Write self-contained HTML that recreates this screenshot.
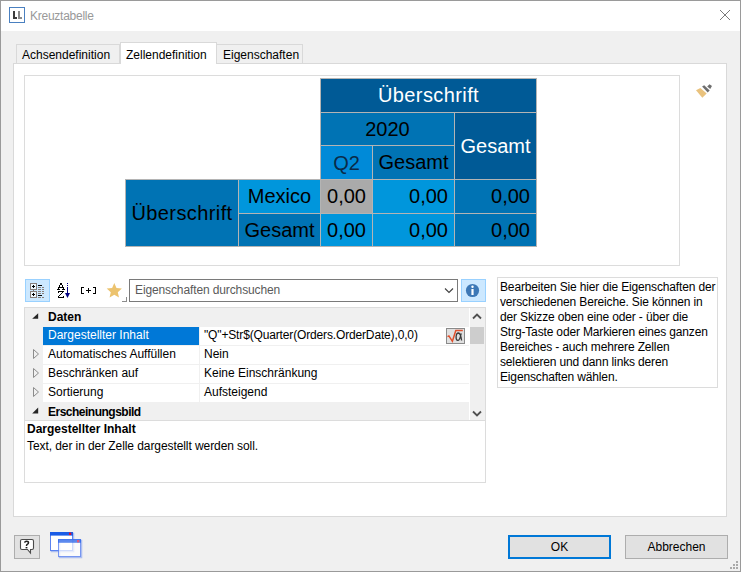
<!DOCTYPE html>
<html><head><meta charset="utf-8">
<style>
*{box-sizing:border-box;margin:0;padding:0}
html,body{width:741px;height:572px;overflow:hidden;background:#f0f0f0}
body{position:relative;font-family:"Liberation Sans",sans-serif;font-size:12px;color:#000}
.a{position:absolute}
.t{position:absolute;white-space:pre;line-height:15px;height:15px}
.xc{border:1px solid #b4b4b4;font-size:20px;white-space:pre;overflow:hidden}
.ct{position:absolute;font-size:20px;line-height:24px;white-space:pre}
</style></head><body>
<!-- window frame -->
<div class="a" style="left:0;top:0;width:741px;height:572px;border:1px solid #9a9a9a"></div>
<div class="a" style="left:1px;top:1px;width:739px;height:30px;background:#fff"></div>
<!-- app icon -->
<div class="a" style="left:9px;top:7px;width:16px;height:16px;border:1px solid #4a80c0;background:#fff"></div>
<div class="a" style="left:13px;top:11px;width:2px;height:8px;background:#3c3c3c"></div>
<div class="a" style="left:13px;top:17px;width:4px;height:2px;background:#3c3c3c"></div>
<div class="a" style="left:18px;top:11px;width:2px;height:8px;background:#8a8a8a"></div>
<div class="a" style="left:18px;top:17px;width:4px;height:2px;background:#8a8a8a"></div>
<div class="t" style="left:30px;top:9px;color:#999;letter-spacing:-0.25px">Kreuztabelle</div>
<!-- close -->
<svg class="a" style="left:715px;top:5px" width="20" height="20"><path d="M5 5L15 15M15 5L5 15" stroke="#7a7a7a" stroke-width="1"/></svg>

<!-- tabs -->
<div class="a" style="left:16px;top:44px;width:104px;height:20px;border:1px solid #d9d9d9;background:#f0f0f0"></div>
<div class="a" style="left:217px;top:44px;width:86px;height:20px;border:1px solid #d9d9d9;border-left:none;background:#f0f0f0"></div>
<div class="a" style="left:13px;top:63px;width:714px;height:454px;border:1px solid #d9d9d9;background:#fff"></div>
<div class="a" style="left:120px;top:42px;width:97px;height:22px;border:1px solid #d9d9d9;border-bottom:none;background:#fff"></div>
<div class="t" style="left:22px;top:48px">Achsendefinition</div>
<div class="t" style="left:126px;top:48px">Zellendefinition</div>
<div class="t" style="left:223px;top:48px">Eigenschaften</div>

<!-- inner sketch box -->
<div class="a" style="left:24px;top:75px;width:656px;height:191px;border:1px solid #dcdcdc;background:#fff"></div>

<!-- crosstab -->
<div id="xt">
<div class="a xc" style="left:320px;top:78px;width:217px;height:35px;background:#005a96;color:#fff;line-height:33px;text-align:center;"><span style="letter-spacing:0.4px">Überschrift</span></div>
<div class="a xc" style="left:320px;top:112px;width:135px;height:34px;background:#0073b4;color:#000;line-height:32px;text-align:center;">2020</div>
<div class="a xc" style="left:454px;top:112px;width:83px;height:68px;background:#005a96;color:#fff;line-height:66px;text-align:center;">Gesamt</div>
<div class="a xc" style="left:320px;top:145px;width:53px;height:35px;background:#008ad8;color:#0a2a48;line-height:35px;text-align:center;">Q2</div>
<div class="a xc" style="left:372px;top:145px;width:83px;height:35px;background:#0073b4;color:#000;line-height:33px;text-align:center;">Gesamt</div>
<div class="a xc" style="left:125px;top:179px;width:114px;height:68px;background:#0073b4;color:#000;line-height:66px;text-align:center;"><span style="letter-spacing:0.4px">Überschrift</span></div>
<div class="a xc" style="left:238px;top:179px;width:83px;height:35px;background:#0096dc;color:#000;line-height:33px;text-align:center;">Mexico</div>
<div class="a xc" style="left:238px;top:213px;width:83px;height:34px;background:#0073b4;color:#000;line-height:32px;text-align:center;">Gesamt</div>
<div class="a xc" style="left:320px;top:179px;width:53px;height:35px;background:#aaaaaa;color:#000;line-height:33px;text-align:right;padding-right:6px;">0,00</div>
<div class="a xc" style="left:372px;top:179px;width:83px;height:35px;background:#0096dc;color:#000;line-height:33px;text-align:right;padding-right:6px;">0,00</div>
<div class="a xc" style="left:454px;top:179px;width:83px;height:35px;background:#0073b4;color:#000;line-height:33px;text-align:right;padding-right:6px;">0,00</div>
<div class="a xc" style="left:320px;top:213px;width:53px;height:34px;background:#0096dc;color:#000;line-height:32px;text-align:right;padding-right:6px;">0,00</div>
<div class="a xc" style="left:372px;top:213px;width:83px;height:34px;background:#0096dc;color:#000;line-height:32px;text-align:right;padding-right:6px;">0,00</div>
<div class="a xc" style="left:454px;top:213px;width:83px;height:34px;background:#0073b4;color:#000;line-height:32px;text-align:right;padding-right:6px;">0,00</div>
</div>

<!-- brush icon -->
<svg class="a" style="left:692px;top:80px" width="24" height="20" viewBox="692 80 24 20">
<path d="M696 90.3L700.4 88L706.7 93.5L702.3 97.8Z" fill="#e9c27d"/>
<path d="M702.1 86.6L704.2 85.2L709.7 90.5L707.7 92.6Z" fill="#6e6e6e"/>
<path d="M707.2 86.5L709.5 84.2L712 86.1L710.2 88.9Z" fill="#6e6e6e"/>
</svg>

<!-- toolbar -->
<div class="a" style="left:25px;top:279px;width:25px;height:23px;background:#cce8ff;border:1px solid #99d1ff"></div>
<svg class="a" style="left:25px;top:279px;shape-rendering:crispEdges" width="105" height="24" viewBox="25 279 105 24">
<rect x="30.5" y="283.5" width="6" height="6" fill="#eef8ff" stroke="#857d7a"/><rect x="30.5" y="291.5" width="6" height="6" fill="#eef8ff" stroke="#857d7a"/><rect x="33" y="290" width="1" height="1" fill="#857d7a"/><rect x="32" y="286" width="3" height="1" fill="#000"/><rect x="33" y="285" width="1" height="3" fill="#000"/><rect x="32" y="294" width="3" height="1" fill="#000"/><rect x="33" y="293" width="1" height="3" fill="#000"/><rect x="38" y="285" width="4" height="1" fill="#000"/><rect x="38" y="295" width="4" height="1" fill="#000"/><rect x="38" y="287" width="3" height="1" fill="#8a807c"/><rect x="42" y="287" width="2" height="1" fill="#8a807c"/><rect x="38" y="289" width="3" height="1" fill="#8a807c"/><rect x="42" y="289" width="2" height="1" fill="#8a807c"/><rect x="38" y="291" width="3" height="1" fill="#8a807c"/><rect x="42" y="291" width="2" height="1" fill="#8a807c"/><rect x="38" y="293" width="3" height="1" fill="#8a807c"/><rect x="42" y="293" width="2" height="1" fill="#8a807c"/><rect x="38" y="297" width="3" height="1" fill="#8a807c"/><rect x="42" y="297" width="2" height="1" fill="#8a807c"/>
<rect x="60" y="283" width="2" height="1" fill="#000"/><rect x="60" y="284" width="2" height="1" fill="#000"/><rect x="59" y="285" width="1" height="1" fill="#000"/><rect x="62" y="285" width="1" height="1" fill="#000"/><rect x="59" y="286" width="1" height="1" fill="#000"/><rect x="62" y="286" width="1" height="1" fill="#000"/><rect x="58" y="287" width="6" height="1" fill="#000"/><rect x="58" y="288" width="1" height="1" fill="#000"/><rect x="63" y="288" width="1" height="1" fill="#000"/><rect x="57" y="289" width="3" height="1" fill="#000"/><rect x="62" y="289" width="3" height="1" fill="#000"/><rect x="58" y="291" width="6" height="1" fill="#000"/><rect x="58" y="292" width="1" height="1" fill="#000"/><rect x="62" y="292" width="1" height="1" fill="#000"/><rect x="61" y="293" width="1" height="1" fill="#000"/><rect x="60" y="294" width="1" height="1" fill="#000"/><rect x="59" y="295" width="1" height="1" fill="#000"/><rect x="58" y="296" width="1" height="1" fill="#000"/><rect x="63" y="296" width="1" height="1" fill="#000"/><rect x="58" y="297" width="6" height="1" fill="#000"/><rect x="67" y="283" width="1" height="1" fill="#000080"/><rect x="67" y="285" width="1" height="1" fill="#000080"/><rect x="67" y="287" width="1" height="7" fill="#000080"/><path d="M65 293H70L67.5 298Z" fill="#000080" shape-rendering="geometricPrecision"/>
<rect x="81" y="287" width="1" height="7" fill="#000"/><rect x="81" y="287" width="3" height="1" fill="#000"/><rect x="81" y="293" width="3" height="1" fill="#000"/><rect x="95" y="287" width="1" height="7" fill="#000"/><rect x="93" y="287" width="3" height="1" fill="#000"/><rect x="93" y="293" width="3" height="1" fill="#000"/><rect x="86" y="290" width="5" height="1" fill="#000"/><rect x="88" y="288" width="1" height="5" fill="#000"/>
<path d="M114.30 283.00L116.47 288.01L121.91 288.53L117.82 292.14L119.00 297.47L114.30 294.70L109.60 297.47L110.78 292.14L106.69 288.53L112.13 288.01Z" fill="#ecc36f" shape-rendering="geometricPrecision"/>
<path d="M122 301.5H126.5V297" stroke="#8c8c8c" fill="none"/>
</svg>
<div class="a" style="left:129px;top:279px;width:329px;height:23px;border:1px solid #7a7a7a;background:#fff"></div>
<div class="t" style="left:135px;top:283px;color:#5a5a5a;letter-spacing:-0.12px">Eigenschaften durchsuchen</div>
<svg class="a" style="left:443px;top:286px" width="12" height="10" viewBox="0 0 12 10"><path d="M2 2.5L6 6.5L10 2.5" stroke="#404040" stroke-width="1.1" fill="none"/></svg>
<div class="a" style="left:461px;top:279px;width:25px;height:23px;background:#cce8ff;border:1px solid #99d1ff"></div>
<svg class="a" style="left:465px;top:283px" width="16" height="16" viewBox="0 0 16 16">
<circle cx="7.5" cy="7.5" r="6.6" fill="#3d78b6"/>
<circle cx="7.5" cy="3.8" r="1.2" fill="#fff"/>
<path d="M7.5 6V12" stroke="#fff" stroke-width="2.2"/>
</svg>

<!-- property grid -->
<div class="a" style="left:24px;top:307px;width:462px;height:176px;border:1px solid #dcdcdc;background:#f0f0f0"></div>
<div id="pg">
<div class="a" style="left:469px;top:308px;width:1px;height:112px;background:#fff"></div>
<svg class="a" style="left:30px;top:311px" width="10" height="10" viewBox="0 0 10 10"><path d="M8.2 2.3V7.8H2.2Z" fill="#262626"/></svg>
<div class="t" style="left:48px;top:310px;font-weight:bold">Daten</div>
<div class="a" style="left:43px;top:327px;width:156px;height:18px;background:#0078d7"></div>
<div class="a" style="left:200px;top:327px;width:269px;height:18px;background:#fff"></div>
<div class="t" style="left:48px;top:328px;color:#fff">Dargestellter Inhalt</div>
<div class="t" style="left:204px;top:328px;letter-spacing:-0.15px">"Q"+Str$(Quarter(Orders.OrderDate),0,0)</div>
<div class="a" style="left:446px;top:328px;width:19px;height:16px;background:#e0e0e0;border:1px solid #8a8a8a"></div>
<svg class="a" style="left:446px;top:328px" width="19" height="16" viewBox="0 0 19 16">
<path d="M1.5 8.6L2.9 7.9L6.4 13.3L9.8 2.6H16.8" stroke="#e0502c" stroke-width="1.5" fill="none" stroke-linejoin="miter"/>
<path d="M15.2 5.3Q13.8 12.6 11.7 12.4Q9.9 12.2 10.1 8.8Q10.4 5.0 12.4 5.0Q14.6 5.2 15.6 12.5" stroke="#3c3c3c" stroke-width="1.3" fill="none"/>
</svg>
<div class="a" style="left:43px;top:346px;width:156px;height:18px;background:#fff"></div>
<div class="a" style="left:200px;top:346px;width:269px;height:18px;background:#fff"></div>
<svg class="a" style="left:31px;top:348px" width="10" height="12" viewBox="0 0 10 12"><path d="M2.5 1.5L7.5 6L2.5 10.5Z" fill="none" stroke="#8c8c8c"/></svg>
<div class="t" style="left:48px;top:347px">Automatisches Auffüllen</div>
<div class="t" style="left:204px;top:347px">Nein</div>
<div class="a" style="left:43px;top:365px;width:156px;height:18px;background:#fff"></div>
<div class="a" style="left:200px;top:365px;width:269px;height:18px;background:#fff"></div>
<svg class="a" style="left:31px;top:367px" width="10" height="12" viewBox="0 0 10 12"><path d="M2.5 1.5L7.5 6L2.5 10.5Z" fill="none" stroke="#8c8c8c"/></svg>
<div class="t" style="left:48px;top:366px">Beschränken auf</div>
<div class="t" style="left:204px;top:366px">Keine Einschränkung</div>
<div class="a" style="left:43px;top:384px;width:156px;height:18px;background:#fff"></div>
<div class="a" style="left:200px;top:384px;width:269px;height:18px;background:#fff"></div>
<svg class="a" style="left:31px;top:386px" width="10" height="12" viewBox="0 0 10 12"><path d="M2.5 1.5L7.5 6L2.5 10.5Z" fill="none" stroke="#8c8c8c"/></svg>
<div class="t" style="left:48px;top:385px">Sortierung</div>
<div class="t" style="left:204px;top:385px">Aufsteigend</div>
<svg class="a" style="left:30px;top:405px" width="10" height="10" viewBox="0 0 10 10"><path d="M8.2 2.5V8.5H2.2Z" fill="#262626"/></svg>
<div class="t" style="left:48px;top:405px;font-weight:bold;letter-spacing:-0.5px">Erscheinungsbild</div>
<!-- scrollbar -->
<div class="a" style="left:470px;top:327px;width:14px;height:17px;background:#cdcdcd"></div>
<svg class="a" style="left:470px;top:310px" width="14" height="12" viewBox="0 0 14 12"><path d="M3 8.5L7 4.5L11 8.5" stroke="#505050" stroke-width="1.8" fill="none"/></svg>
<svg class="a" style="left:470px;top:408px" width="14" height="12" viewBox="0 0 14 12"><path d="M3 3.5L7 7.5L11 3.5" stroke="#505050" stroke-width="1.8" fill="none"/></svg>
<!-- description -->
<div class="a" style="left:25px;top:420px;width:460px;height:1px;background:#dcdcdc"></div>
<div class="a" style="left:25px;top:421px;width:460px;height:61px;background:#fff"></div>
<div class="t" style="left:27px;top:422px;font-weight:bold">Dargestellter Inhalt</div>
<div class="t" style="left:27px;top:439px;letter-spacing:-0.08px">Text, der in der Zelle dargestellt werden soll.</div>
</div>

<!-- right description -->
<div class="a" style="left:497px;top:277px;width:221px;height:111px;border:1px solid #dcdcdc;background:#fff"></div>
<div class="a" style="left:500px;top:280px;line-height:15px;white-space:pre;letter-spacing:-0.15px">Bearbeiten Sie hier die Eigenschaften der
verschiedenen Bereiche. Sie können in
der Skizze oben eine oder - über die
Strg-Taste oder Markieren eines ganzen
Bereiches - auch mehrere Zellen
selektieren und dann links deren
Eigenschaften wählen.</div>

<!-- bottom buttons -->
<div class="a" style="left:14px;top:535px;width:26px;height:24px;background:#e1e1e1;border:1px solid #adadad"></div>
<svg class="a" style="left:19px;top:538px" width="17" height="17" viewBox="0 0 17 17">
<path d="M3 1.5H13Q14.5 1.5 14.5 3V10Q14.5 11.5 13 11.5H11.5V15L8.5 11.5H3Q1.5 11.5 1.5 10V3Q1.5 1.5 3 1.5Z" fill="#fff" stroke="#4a4a4a" stroke-width="1.1"/>
<path d="M5.6 4.6Q5.9 3.2 7.6 3.2Q9.5 3.2 9.5 4.8Q9.5 5.8 8.3 6.4Q7.5 6.8 7.5 7.9" stroke="#222" stroke-width="1.5" fill="none"/>
<rect x="6.6" y="9" width="1.8" height="1.4" fill="#222"/>
</svg>
<svg class="a" style="left:48px;top:530px" width="36" height="30" viewBox="48 530 36 30">
<rect x="51.5" y="533.5" width="22" height="18" fill="none" stroke="rgba(90,130,240,0.45)" stroke-width="1.5"/>
<rect x="50.5" y="532.5" width="22" height="18" fill="#fff" stroke="#5a82f0" stroke-width="1"/>
<rect x="50" y="532" width="23" height="3.6" fill="#1a5ce6"/>
<rect x="69" y="532.6" width="2.2" height="2.4" fill="#e0102a"/>
<rect x="59.5" y="540.5" width="22" height="17" fill="none" stroke="rgba(90,130,240,0.45)" stroke-width="1.5"/>
<rect x="58.5" y="539.5" width="22" height="17" fill="rgba(255,255,255,0.7)" stroke="rgba(80,120,238,0.75)" stroke-width="1"/>
<rect x="58" y="539.2" width="23" height="3.6" fill="rgba(40,100,232,0.75)"/>
<rect x="77" y="540" width="2.2" height="2.4" fill="#e05a7a"/>
</svg>
<div class="a" style="left:508px;top:535px;width:103px;height:24px;background:#e1e1e1;border:2px solid #0078d7"></div>
<div class="t" style="left:508px;top:540px;width:103px;text-align:center">OK</div>
<div class="a" style="left:625px;top:535px;width:103px;height:24px;background:#e1e1e1;border:1px solid #adadad"></div>
<div class="t" style="left:625px;top:540px;width:103px;text-align:center">Abbrechen</div>
<svg class="a" style="left:728px;top:560px" width="12" height="12" viewBox="0 0 12 12">
<rect x="8" y="1" width="2" height="2" fill="#a9a9a9"/>
<rect x="5" y="4" width="2" height="2" fill="#a9a9a9"/><rect x="8" y="4" width="2" height="2" fill="#a9a9a9"/>
<rect x="2" y="7" width="2" height="2" fill="#a9a9a9"/><rect x="5" y="7" width="2" height="2" fill="#a9a9a9"/><rect x="8" y="7" width="2" height="2" fill="#a9a9a9"/>
</svg>

</body></html>
